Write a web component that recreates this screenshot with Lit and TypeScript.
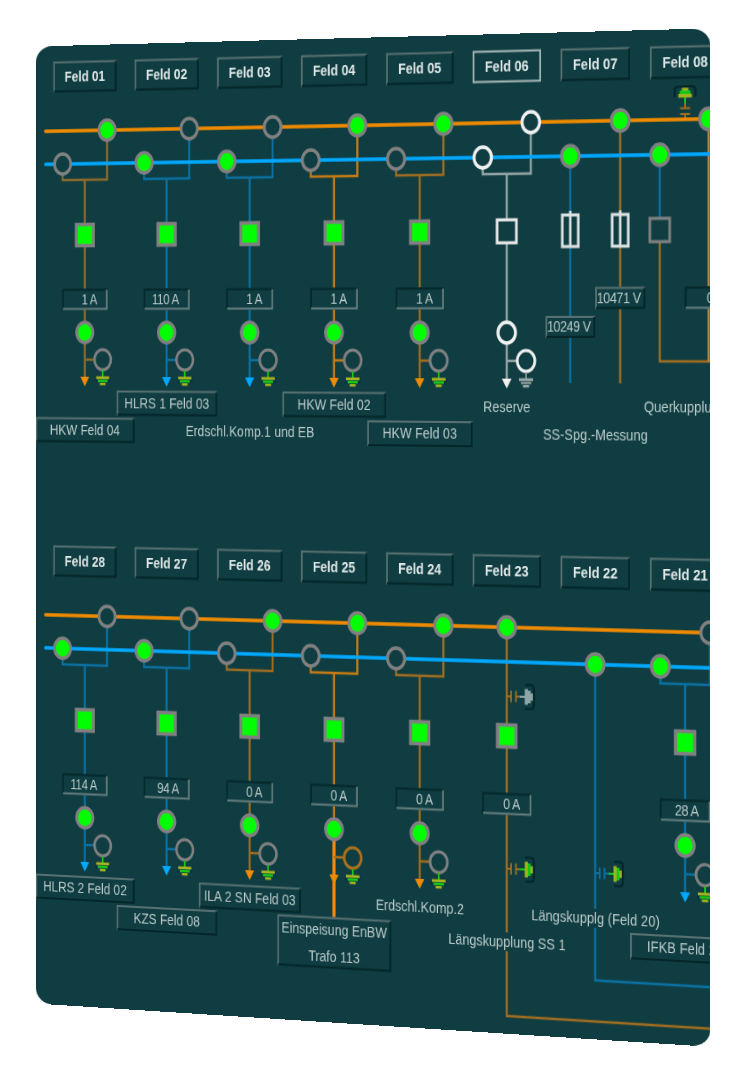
import { css, html, LitElement, svg } from 'lit';
import { customElement } from 'lit/decorators.js';

type Bus = 'o' | 'b' | 'w';

interface Bay {
  col: number;
  on: Bus;
  tone: string;
  arrow: string;
  value?: string;
  earthTone?: string;
}

const GRAY = '#808080';
const GREEN = '#00ff00';
const ORANGE = '#f08a00';
const BLUE = '#00a8ff';
const BG = '#0f3d41';
const BROWN = '#8a6a2c';
const RUST = '#9c6c22';
const AMBER = '#c27a17';
const STEEL = '#0b6f9f';

const ORANGE_Y = 85;
const BLUE_Y = 118;
const JOIN_Y = 134;
const LOWER = 483;
const EARTH_DX = 22;

const cx = (i: number) => 60.7 + 100.05 * i;

const topBays: Bay[] = [
  { col: 0, on: 'o', tone: BROWN, arrow: ORANGE, value: '1 A' },
  { col: 1, on: 'b', tone: STEEL, arrow: BLUE, value: '110 A' },
  { col: 2, on: 'b', tone: STEEL, arrow: BLUE, value: '1 A' },
  { col: 3, on: 'o', tone: AMBER, arrow: ORANGE, value: '1 A' },
  { col: 4, on: 'o', tone: RUST, arrow: ORANGE, value: '1 A' },
  { col: 5, on: 'w', tone: '#93a3a3', arrow: '#f0f0f0' },
];

const lowerBays: Bay[] = [
  { col: 0, on: 'b', tone: STEEL, arrow: BLUE, value: '114 A' },
  { col: 1, on: 'b', tone: STEEL, arrow: BLUE, value: '94 A' },
  { col: 2, on: 'o', tone: RUST, arrow: ORANGE, value: '0 A' },
  { col: 3, on: 'o', tone: AMBER, arrow: ORANGE, value: '0 A', earthTone: '#a8701f' },
  { col: 4, on: 'o', tone: RUST, arrow: ORANGE, value: '0 A' },
  { col: 7, on: 'b', tone: STEEL, arrow: BLUE, value: '28 A' },
];

const node = (x: number, y: number, on: boolean, ring = GRAY) =>
  svg`<circle cx=${x} cy=${y} r="10" fill=${on ? GREEN : BG} stroke=${ring} stroke-width="3.4"></circle>`;

const wire = (d: string, tone: string, width = 2.5) =>
  svg`<path d=${d} fill="none" stroke=${tone} stroke-width=${width}></path>`;

function box(x: number, y: number, w: number, h: number, kind: 'raised' | 'sunken' | 'marked') {
  const l = x - w / 2;
  const r = x + w / 2;
  const t = y - h / 2;
  const b = y + h / 2;
  const tl = kind === 'sunken' ? '#05292d' : kind === 'marked' ? '#a5b5b5' : '#587071';
  const br = kind === 'sunken' ? '#647c7d' : kind === 'marked' ? '#a5b5b5' : '#04262a';
  return svg`
    <rect x=${l} y=${t} width=${w} height=${h} fill=${BG}></rect>
    <path d="M${l + 1} ${b}V${t + 1}H${r}" fill="none" stroke=${tl} stroke-width="2"></path>
    <path d="M${l + 1} ${b - 1}H${r - 1}V${t + 1}" fill="none" stroke=${br} stroke-width="2"></path>
  `;
}

const fieldBtn = (i: number, y: number, label: string, marked = false) => svg`
  ${box(cx(i), y, 78, 31, marked ? 'marked' : 'raised')}
  <text class="field" x=${cx(i)} y=${y + 5}>${label}</text>
`;

const labelBox = (x: number, y: number, label: string) => svg`
  ${box(x, y, 122, 25, 'raised')}
  <text class="label" x=${x} y=${y + 5}>${label}</text>
`;

const valueBox = (x: number, y: number, label: string, kind: 'raised' | 'sunken' = 'sunken') => svg`
  ${box(x, y, 56, 21, kind)}
  <text class="value" x=${x + 28 - (kind === 'raised' ? 5 : 13)} y=${y + 5}>${label}</text>
`;

const bare = (x: number, y: number, label: string, bg = 0) => svg`
  ${bg ? svg`<rect x=${x - bg / 2} y=${y - 9} width=${bg} height="18" fill=${BG}></rect>` : ''}
  <text class="label" x=${x} y=${y + 5}>${label}</text>
`;

function earth(x: number, dim: boolean) {
  const a = dim ? '#9aa8a8' : '#a6b51e';
  const b = dim ? '#7f9090' : '#16c816';
  return svg`
    ${dim ? '' : svg`<rect x=${x - 9} y="329" width="18" height="7" rx="3" fill="#0b2c48"></rect>`}
    <path d="M${x} 324V330" stroke=${b} stroke-width="2"></path>
    <rect x=${x - 8} y="329.5" width="16" height="2.8" fill=${a}></rect>
    <rect x=${x - 6} y="332.8" width="12" height="2.6" fill=${b}></rect>
    <rect x=${x - 3.5} y="336" width="7" height="2.4" fill=${a}></rect>
  `;
}

// capacitor with earth tab, drawn pointing right from the feeder
function cap(x: number, y: number, tone: string, live: boolean, turn = 0) {
  const stem = live ? '#16c816' : '#8fa6a8';
  const bar = live ? '#9fb31e' : '#8fa6a8';
  return svg`
    <g transform="translate(${x} ${y}) rotate(${turn})">
      <path d="M21 -11.5h6q4 0 4 4v15q0 4 -4 4h-6" fill="none" stroke="#05262a" stroke-width="2.2"></path>
      <path d="M0 0H5M5 -5.5V5.5M10.5 -5.5V5.5M10.5 0H15" fill="none" stroke=${tone} stroke-width="2"></path>
      <path d="M15 0H22" stroke=${stem} stroke-width="2"></path>
      <rect x="20.5" y="-7.5" width="3.6" height="15" fill=${bar}></rect>
      <rect x="24" y="-6" width="3.2" height="12" fill=${stem}></rect>
      <rect x="27" y="-3.5" width="2.8" height="7" fill=${bar}></rect>
    </g>
  `;
}

function bayLines(b: Bay) {
  const x = cx(b.col);
  const tail = b.earthTone ? 'thick' : '';
  return svg`
    ${wire(`M${x - 27.4} ${BLUE_Y}V${JOIN_Y}H${x + 27.4}V${ORANGE_Y}`, b.tone)}
    ${wire(`M${x} ${JOIN_Y}V${tail ? 286 : 331}`, b.tone)}
    ${tail ? wire(`M${x} 286V372`, '#f58a10', 3.6) : ''}
    ${wire(`M${x} 313H${x + EARTH_DX - 8}`, b.earthTone ?? b.tone)}
  `;
}

function bayParts(b: Bay) {
  const x = cx(b.col);
  const white = b.on === 'w';
  const ring = white ? '#f0f0f0' : GRAY;
  return svg`
    ${white
      ? svg`<rect x=${x - 11} y="178" width="22" height="22" fill=${BG} stroke="#e8e8e8" stroke-width="3"></rect>`
      : svg`<rect x=${x - 10.5} y="178.5" width="21" height="21" fill=${GREEN} stroke=${GRAY} stroke-width="3.6"></rect>`}
    ${b.value ? valueBox(x, 253, b.value) : ''}
    ${node(x, 286, !white, ring)}
    <circle cx=${x + EARTH_DX} cy="313" r="10" fill=${BG} stroke=${b.earthTone ?? ring} stroke-width="3"></circle>
    ${earth(x + EARTH_DX, white)}
    <polygon points="${x - 5.5},330 ${x + 5.5},330 ${x},339.5" fill=${b.arrow}></polygon>
  `;
}

function busNodes(b: Bay) {
  const x = cx(b.col);
  const ring = b.on === 'w' ? '#f0f0f0' : GRAY;
  return svg`
    ${node(x - 27.4, BLUE_Y, b.on === 'b', ring)}
    ${node(x + 27.4, ORANGE_Y, b.on === 'o', ring)}
  `;
}

const buses = svg`
  <path d="M12 ${ORANGE_Y}H789" stroke=${ORANGE} stroke-width="3.6" stroke-linecap="round"></path>
  <path d="M12 ${BLUE_Y}H789" stroke=${BLUE} stroke-width="3.6" stroke-linecap="round"></path>
`;

const fuse = (x: number) => svg`
  <rect x=${x - 9} y="174" width="18" height="30" fill=${BG} stroke="#dce1e1" stroke-width="3"></rect>
  <path d="M${x} 170V204" stroke="#dce1e1" stroke-width="2.8"></path>
`;

@customElement('app-root')
export class AppRoot extends LitElement {
  static override styles = css`
    :host {
      display: block;
      width: 747px;
      height: 1080px;
      overflow: hidden;
      background: #ffffff;
    }
    .panel {
      width: 789px;
      height: 957px;
      overflow: hidden;
      background: #0f3d41;
      border-radius: 20px / 16px;
      transform-origin: 0 0;
      transform: matrix3d(
        0.8008, -0.02511, 0, -0.00007642,
        0, 1, 0, 0,
        0, 0, 1, 0,
        35.8, 46.5, 0, 1
      );
    }
    svg {
      display: block;
      width: 789px;
      height: 957px;
      filter: blur(0.45px);
    }
    text {
      font-family: 'Liberation Sans', Arial, sans-serif;
      text-anchor: middle;
    }
    .field {
      font-size: 14.5px;
      font-weight: 700;
      fill: #e0e7e7;
    }
    .label {
      font-size: 14.5px;
      fill: #bccbcb;
    }
    .value {
      font-size: 14px;
      letter-spacing: -0.4px;
      fill: #bccbcb;
      text-anchor: end;
    }
  `;

  override render() {
    return html`
      <div class="panel">
        <svg viewBox="0 0 789 957">
          ${this.upper()}
          <g transform="translate(0 ${LOWER})">${this.lower()}</g>
        </svg>
      </div>
    `;
  }

  private upper() {
    return svg`
      ${['01', '02', '03', '04', '05', '06', '07', '08'].map((n, i) =>
        fieldBtn(i, 31, `Feld ${n}`, n === '06'),
      )}

      ${topBays.map(bayLines)}
      ${wire(`M633 ${BLUE_Y}V334`, STEEL)}
      ${wire(`M689 ${ORANGE_Y}V334`, RUST)}
      ${wire(`M733 ${BLUE_Y}V177`, STEEL)}
      ${wire('M733 200V313H789', RUST)}
      ${wire(`M787 ${ORANGE_Y}V313`, '#b58a4a')}
      ${cap(cx(7), ORANGE_Y, RUST, true, -90)}

      ${buses}
      ${topBays.map(busNodes)}
      ${node(633, BLUE_Y, true)}
      ${node(689, ORANGE_Y, true)}
      ${node(733, BLUE_Y, true)}
      ${node(787, ORANGE_Y, true)}

      ${topBays.map(bayParts)}
      ${fuse(633)}
      ${fuse(689)}
      <rect x="722" y="178" width="22" height="22" fill=${BG} stroke=${GRAY} stroke-width="3"></rect>
      ${valueBox(633, 280.5, '10249 V', 'raised')}
      ${valueBox(689, 253, '10471 V', 'raised')}
      ${valueBox(788.7, 253, '0 A')}

      ${labelBox(cx(0), 383, 'HKW Feld 04')}
      ${labelBox(cx(1), 356, 'HLRS 1 Feld 03')}
      ${bare(cx(2), 383, 'Erdschl.Komp.1 und EB')}
      ${labelBox(cx(3), 356, 'HKW Feld 02')}
      ${labelBox(cx(4), 383.5, 'HKW Feld 03')}
      ${bare(cx(5), 357, 'Reserve')}
      ${bare(cx(6), 383.5, 'SS-Spg.-Messung')}
      ${bare(cx(7), 356.5, 'Querkupplung')}
    `;
  }

  private lower() {
    return svg`
      ${['28', '27', '26', '25', '24', '23', '22', '21'].map((n, i) =>
        fieldBtn(i, 31, `Feld ${n}`),
      )}

      ${lowerBays.map(bayLines)}
      ${wire(`M${cx(5)} ${ORANGE_Y}V457H789`, RUST)}
      ${wire(`M${cx(6)} ${BLUE_Y}V418H789`, STEEL)}
      ${cap(cx(5), 151, RUST, false)}
      ${cap(cx(5), 316, RUST, true)}
      ${cap(cx(6), 316, STEEL, true)}

      ${buses}
      ${lowerBays.map(busNodes)}
      ${node(cx(5), ORANGE_Y, true)}
      ${node(cx(6), BLUE_Y, true)}

      ${lowerBays.map(bayParts)}
      <rect x=${cx(5) - 10.5} y="178.5" width="21" height="21" fill=${GREEN} stroke=${GRAY} stroke-width="3.6"></rect>
      ${valueBox(cx(5), 254, '0 A')}

      ${labelBox(cx(0), 356.5, 'HLRS 2 Feld 02')}
      ${labelBox(cx(1), 383.5, 'KZS Feld 08')}
      ${labelBox(cx(2), 357, 'ILA 2 SN Feld 03')}
      ${box(cx(3), 396.5, 134, 50, 'raised')}
      <text class="label" x=${cx(3)} y="389.5">Einspeisung EnBW</text>
      <text class="label" x=${cx(3)} y="415">Trafo 113</text>
      ${bare(cx(4), 357.5, 'Erdschl.Komp.2')}
      ${bare(cx(5), 386, 'Längskupplung SS 1', 138)}
      ${bare(cx(6), 359, 'Längskupplg (Feld 20)', 146)}
      ${labelBox(cx(7), 383.5, 'IFKB Feld 21')}
    `;
  }
}

declare global {
  interface HTMLElementTagNameMap {
    'app-root': AppRoot;
  }
}
